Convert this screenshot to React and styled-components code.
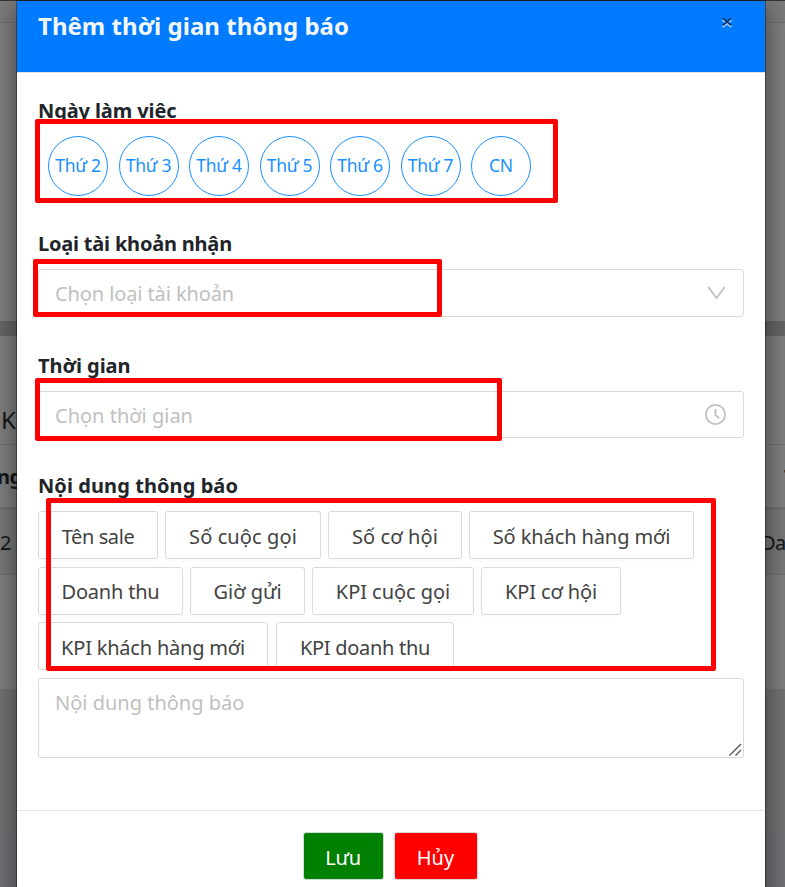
import React from "react";
import styled, { createGlobalStyle } from "styled-components";

const Global = createGlobalStyle`
  * { box-sizing: border-box; }
  body { margin: 0; background: #7f7f7f; font-family: "Noto Sans", "Open Sans", sans-serif; overflow: hidden; }
`;

const Screen = styled.div`
  position: relative;
  width: 785px;
  height: 887px;
  overflow: hidden;
`;
const Backdrop = styled.div`
  display: flex;
  flex-direction: column;
  height: 887px;
`;
const Band = styled.div`
  display: flex;
  align-items: ${(p) => p.$align || "center"};
  justify-content: space-between;
  flex: none;
  height: ${(p) => p.$h}px;
  background: ${(p) => p.$bg || "#7f7f7f"};
  border-bottom: ${(p) => (p.$line ? `${p.$lw || 1}px solid ${p.$line}` : "0")};
  padding-left: ${(p) => p.$pl || 0}px;
  padding-bottom: ${(p) => p.$pb || 0}px;
  font-size: ${(p) => p.$size || 20}px;
  font-weight: ${(p) => p.$weight || 400};
  color: #14171a;
`;
const Bit = styled.span`
  flex: none;
  white-space: nowrap;
  width: ${(p) => p.$w}px;
  margin-left: ${(p) => p.$ml || 0}px;
  letter-spacing: -0.5px;
`;

const Dialog = styled.section`
  position: absolute;
  left: 16px;
  top: 0;
  width: 750px;
  height: 910px;
  display: flex;
  flex-direction: column;
  background: #fff;
  background-clip: padding-box;
  border: 1px solid rgba(0, 0, 0, 0.35);
  box-shadow: 0 8px 24px rgba(0, 0, 0, 0.5);
`;
const Header = styled.header`
  display: flex;
  justify-content: space-between;
  flex: none;
  height: 72px;
  padding: 8px 32px 0 21px;
  background: #007bff;
  border-bottom: 1px solid #dee2e6;
`;
const Title = styled.h5`
  margin: 0;
  font-size: 24px;
  line-height: 34px;
  font-weight: 700;
  color: #f3f8ff;
`;
const Close = styled.button`
  width: 12px;
  height: 12px;
  margin-top: 7px;
  padding: 0;
  border: 0;
  background: none;
`;
const CloseIcon = styled.svg`
  display: block;
`;
const Body = styled.div`
  display: flex;
  flex-direction: column;
  flex: none;
  height: 737px;
  padding: 23px 21px 0;
`;
const Label = styled.label`
  flex: none;
  height: ${(p) => p.$h}px;
  padding-top: ${(p) => p.$pt || 0}px;
  font-size: 20px;
  line-height: 30px;
  font-weight: 700;
  color: #212529;
`;
const T = styled.span`
  display: inline-block;
  white-space: nowrap;
  letter-spacing: ${(p) => p.$ls || 0}px;
`;
const Placeholder = styled(T)`
  padding-top: 2px;
`;
const Days = styled.div`
  display: flex;
  gap: 10.5px;
  flex: none;
  height: 92px;
  padding-left: 10px;
`;
const Day = styled.button`
  width: 60px;
  height: 60px;
  flex: none;
  padding: 0 0 2px;
  border: 1px solid #1890ff;
  border-radius: 50%;
  background: #fff;
  color: #1890ff;
  font: 400 17.5px/56px "Noto Sans", sans-serif;
`;
const Field = styled.div`
  display: flex;
  align-items: center;
  justify-content: space-between;
  flex: none;
  height: ${(p) => p.$h}px;
  margin-bottom: ${(p) => p.$mb}px;
  padding: 0 ${(p) => p.$pr}px 0 16px;
  border: 1px solid #d9d9d9;
  border-radius: 3px;
  font-size: 20px;
  line-height: ${(p) => p.$lh || 28}px;
  color: #bfbfbf;
`;
const Chips = styled.div`
  display: grid;
  flex: none;
  grid-template-rows: 48px 48px 48px;
  row-gap: 7.5px;
  margin-bottom: 8px;
`;
const ChipRow = styled.div`
  display: flex;
  gap: ${(p) => p.$gap}px;
`;
const Chip = styled.button`
  flex: none;
  width: ${(p) => p.$w}px;
  height: 48px;
  padding: ${(p) => p.$pt}px 0 0;
  border: 1px solid #d9d9d9;
  border-radius: 3px;
  background: #fff;
  box-shadow: 0 2px 0 rgba(0, 0, 0, 0.016);
  color: #424242;
  font: 400 20px/40px "Noto Sans", sans-serif;
`;
const Area = styled.div`
  display: flex;
  justify-content: space-between;
  flex: none;
  height: 80px;
  padding: 9px 1px 1px 16px;
  border: 1px solid #d9d9d9;
  border-radius: 3px;
  font-size: 20px;
  line-height: 30px;
  color: #bfbfbf;
`;
const Grip = styled.svg`
  align-self: flex-end;
`;
const Footer = styled.footer`
  display: flex;
  justify-content: center;
  gap: 10px;
  padding: 21px 2px 0 0;
  border-top: 1px solid #dee2e6;
`;
const Action = styled.button`
  width: ${(p) => p.$w}px;
  height: 48px;
  padding: 4px 0 0;
  border: 1px solid #d9d9d9;
  border-radius: 3px;
  background: ${(p) => p.$bg};
  color: #fff;
  font: 400 20px/40px "Noto Sans", sans-serif;
`;
const Mark = styled.div`
  position: absolute;
  left: ${(p) => p.$x}px;
  top: ${(p) => p.$y}px;
  width: ${(p) => p.$w}px;
  height: ${(p) => p.$h}px;
  border: 5px solid #f00;
  border-radius: 2px;
`;

const days = ["Thứ 2", "Thứ 3", "Thứ 4", "Thứ 5", "Thứ 6", "Thứ 7", "CN"];
const chipRows = [
  { gap: 7, pt: 4, items: [["Tên sale", 120, -0.4], ["Số cuộc gọi", 156, 0.1], ["Số cơ hội", 134, 0.1], ["Số khách hàng mới", 225, -0.1]] },
  { gap: 7, pt: 2, items: [["Doanh thu", 145, -0.2], ["Giờ gửi", 115, 0], ["KPI cuộc gọi", 162, -0.05], ["KPI cơ hội", 140, -0.1]] },
  { gap: 8, pt: 4, items: [["KPI khách hàng mới", 230, -0.2], ["KPI doanh thu", 178, -0.3]] },
];

export default function App() {
  return (
    <Screen>
      <Global />
      <Backdrop>
        <Band $h={1} $bg="#343638" />
        <Band $h={22} $bg="#7b7b7b" $line="#6f6f6f" />
        <Band $h={298} />
        <Band $h={15} $bg="#666" />
        <Band $h={109} $line="#6f7173" $size={24} $align="flex-end" $pb={8} $pl={1}><Bit $w={16}>K</Bit></Band>
        <Band $h={65} $line="#6f7276" $lw={3} $weight={700}><Bit $w={18} $ml={-3}>ng</Bit><Bit $w={1}>T</Bit></Band>
        <Band $h={65} $bg="#787878" $line="#6f7173"><Bit $w={17}>2</Bit><Bit $w={24}>Dan</Bit></Band>
        <Band $h={114} />
        <Band $h={143} $bg="#737373" />
        <Band $h={55} $bg="#6f7278" />
      </Backdrop>
      <Dialog>
        <Header>
          <Title><T $ls={0.03}>Thêm thời gian thông báo</T></Title>
          <Close aria-label="Đóng">
            <CloseIcon width="12" height="12" viewBox="0 0 12 12" fill="none" strokeWidth="2.2">
              <path d="M1.5 4 10.5 11M10.5 4 1.5 11" stroke="#a5d0ff" />
              <path d="M1.8 2.3 10.2 9.3M10.2 2.3 1.8 9.3" stroke="#003d80" strokeWidth="1.8" />
            </CloseIcon>
          </Close>
        </Header>
        <Body>
          <Label $h={40}><T $ls={-0.1}>Ngày làm việc</T></Label>
          <Days>{days.map((d) => <Day key={d}><T $ls={-0.25}>{d}</T></Day>)}</Days>
          <Label $h={41} $pt={1}><T $ls={-0.2}>Loại tài khoản nhận</T></Label>
          <Field $h={48} $mb={34} $pr={17}>
            <Placeholder $ls={-0.1}>Chọn loại tài khoản</Placeholder>
            <svg width="19" height="14" viewBox="0 0 19 14" fill="none" stroke="#bfbfbf" strokeWidth="1.8"><path d="M1.2 1 9.5 12 17.8 1" /></svg>
          </Field>
          <Label $h={40}><T $ls={-0.05}>Thời gian</T></Label>
          <Field $h={47} $mb={33} $pr={17} $lh={29}>
            <Placeholder>Chọn thời gian</Placeholder>
            <svg width="22" height="22" viewBox="0 0 22 22" fill="none" stroke="#bfbfbf" strokeWidth="1.8"><circle cx="11.5" cy="10.5" r="9.6" /><path d="M11.5 5V11L15.3 14.1" /></svg>
          </Field>
          <Label $h={40}><T $ls={0.08}>Nội dung thông báo</T></Label>
          <Chips>
            {chipRows.map((row, i) => (
              <ChipRow key={i} $gap={row.gap}>
                {row.items.map(([t, w, ls]) => <Chip key={t} $w={w} $pt={row.pt}><T $ls={ls}>{t}</T></Chip>)}
              </ChipRow>
            ))}
          </Chips>
          <Area>
            <T>Nội dung thông báo</T>
            <Grip width="13" height="13" viewBox="0 0 13 13" stroke="#555" strokeWidth="1.4"><path d="M0.5 12.5 12 1M6.5 12.5 12 7" /></Grip>
          </Area>
        </Body>
        <Footer>
          <Action $w={81} $bg="#008000"><T $ls={-0.3}>Lưu</T></Action>
          <Action $w={84} $bg="#f00"><T>Hủy</T></Action>
        </Footer>
      </Dialog>
      <Mark $x={35} $y={119} $w={523} $h={84} />
      <Mark $x={33} $y={259} $w={409} $h={58} />
      <Mark $x={35} $y={378} $w={467} $h={63} />
      <Mark $x={46} $y={498} $w={670} $h={173} />
    </Screen>
  );
}
